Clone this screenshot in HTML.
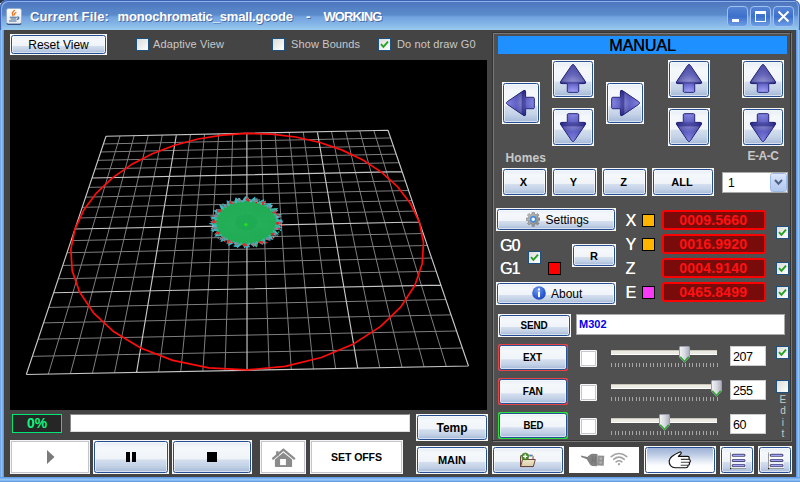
<!DOCTYPE html>
<html><head><meta charset="utf-8"><title>Current File: monochromatic_small.gcode - WORKING</title>
<style>
html,body{margin:0;padding:0}
body{width:800px;height:482px;overflow:hidden;position:relative;background:#222;font-family:"Liberation Sans",sans-serif;font-size:12px;color:#000}
.a{position:absolute;box-sizing:border-box}
#frame{left:0;top:0;width:800px;height:482px;border-radius:7px 7px 0 0;background:linear-gradient(90deg,#4a86de 0,#9ccaf5 1px,#8abef2 2px,#6aa2ea 3px,#5a96e6 4px,#5a96e6 796px,#6aa2ea 797px,#8abef2 798px,#9ccaf5 799px,#4a86de 800px)}
#fbot{left:0;top:477px;width:800px;height:5px;background:linear-gradient(#5a96e6 0,#6fa8ec 1px,#94c6f5 2.5px,#7db4f0 4px,#4a86de 5px)}
#title{left:0;top:0;width:800px;height:30px;background:linear-gradient(#3b5fae 0,#3b5fae 1px,#8fb5ea 1px,#8fb5ea 2px,#4f76bd 2px,#5582c6 9px,#5b8bcb 15px,#72a2de 17px,#84b5e6 24px,#9acbec 30px);border-radius:7px 7px 0 0;box-shadow:inset 1px 1px 0 #3d62b4,inset -1px 0 0 #3d62b4,inset 2px 2px 0 #8ab2ea,inset -2px 0 0 #8ab2ea}
#ttext{left:30px;top:9px;width:400px;height:16px;line-height:16px;color:#fff;font-weight:bold;font-size:13px;white-space:pre;text-shadow:1px 1px 0 rgba(30,50,110,.55)}
#content{left:4px;top:30px;width:792px;height:447px;background:#444}
.tb{top:6px;width:21px;height:21px;border:1px solid #9fc0f0;border-radius:4px;background:linear-gradient(#5584d4,#3e70cb 50%,#6c9de4)}
.btn{background:#f8f7f4}
.btn>.bi{position:absolute;left:1px;top:1px;right:1px;bottom:1px;box-sizing:border-box;border:1px solid #244f94;border-radius:2.5px;background:linear-gradient(#e7edf7 0,#f5f8fb 20%,#f0f4f9 56%,#d3deee 60%,#c4d2e7 80%,#a4b8d8 100%);box-shadow:inset 0 0 0 1px rgba(255,255,255,.55);display:flex;align-items:center;justify-content:center;font-weight:bold;font-size:11px;color:#000}
.t{display:inline-block;transform:scaleX(.9);letter-spacing:-.1px}
.btn.red{background:#e84444;border-radius:2px}
.btn.green{background:#2ee03e;border-radius:2px}
.btn.foc>.bi{background:linear-gradient(#9fb3d6 0,#b9c8e2 25%,#dfe6f2 50%,#fbfcfe 72%,#fff 100%);box-shadow:inset 1px 0 0 #fff,inset -1px 0 0 #fff}
.dis{background:#fff;border:1px solid #f4f4f4;box-shadow:inset 0 0 0 1px #c4c4cc}
.cb{width:13px;height:13px;border:1px solid #1c5180;background:linear-gradient(135deg,#dcdcd7,#fff)}
.cb svg{position:absolute;left:1px;top:1px}
.lbl{color:#c8c8c8;font-size:11px;white-space:pre;line-height:14px;letter-spacing:.12px}
.wl{color:#fff;font-size:16px;line-height:16px;white-space:pre;text-shadow:.3px 0 0 #fff}
.sw{width:13px;height:13px;border:1px solid #000}
.rf{width:104px;height:20px;border:2px solid #f00;border-radius:3px;background:#7a0b0b;color:#ff1212;text-indent:-1.5px;font-weight:bold;font-size:14px;line-height:16px;text-align:center;letter-spacing:.2px}
.bcb{width:17px;height:17px;background:#fff;border:1px solid #f8f8f8;box-shadow:inset 0 0 0 1px #c6c6ce;border-radius:1px}
.trk{height:5px;background:#ecebe3;border-top:1px solid #c8c6b8;border-bottom:1px solid #fff}
.tick{height:4px;background:repeating-linear-gradient(90deg,#a2a2a2 0,#a2a2a2 1.2px,transparent 1.2px,transparent 3.55px)}
.vf{width:36px;height:20px;background:#fff;border:1px solid #ccc;font-size:12.5px;line-height:21px;padding-left:2px;letter-spacing:-.5px}
</style></head><body>
<div class="a" style="left:0;top:0;width:7px;height:3px;background:#2c3440"></div><div class="a" style="left:0;top:3px;width:3px;height:4px;background:#f4f0e4"></div><div class="a" style="left:793px;top:0;width:7px;height:7px;background:#fff"></div>
<div id="frame" class="a"></div>
<div id="fbot" class="a"></div>
<div id="title" class="a"></div>
<div id="ttext" class="a"><span id="t1" class="a" style="left:0;letter-spacing:.13px">Current File:</span><span id="t2" class="a" style="left:87.5px;letter-spacing:-.18px">monochromatic_small.gcode</span><span id="t3" class="a" style="left:276px">-</span><span id="t4" class="a" style="left:293.5px;letter-spacing:-.9px">WORKING</span></div>
<div id="content" class="a"></div>

<!-- left toolbar -->
<div class="a btn" style="left:10px;top:34px;width:97px;height:21px"><div class="bi" style="font-weight:normal;font-size:12px">Reset View</div></div>
<div class="a cb" style="left:136px;top:38px"></div><div class="a lbl" style="left:153px;top:37px">Adaptive View</div>
<div class="a cb" style="left:272px;top:38px"></div><div class="a lbl" style="left:291px;top:37px">Show Bounds</div>
<div class="a cb" style="left:378px;top:38px"><svg width="9" height="9" viewBox="0 0 9 9"><path d="M1 4.2L3.4 6.8L8 1.6" stroke="#21a121" stroke-width="1.8" fill="none"/></svg></div><div class="a lbl" style="left:397px;top:37px">Do not draw G0</div>

<!-- canvas -->
<div class="a" style="left:10px;top:60px;width:477px;height:350px;background:#000;overflow:hidden">
<svg width="478" height="350" viewBox="0 0 478 350" style="position:absolute;left:0;top:0">
<path d="M110.07 75.91L38.34 314.08M93.41 83.94L380.61 77.95M124.15 75.61L60.39 313.65M90.72 91.98L383.32 85.89M138.23 75.32L82.45 313.23M87.93 100.32L386.14 94.13M152.31 75.02L104.52 312.80M85.04 108.98L389.06 102.69M180.48 74.43L148.67 311.96M78.89 127.37L395.27 120.87M194.57 74.14L170.75 311.53M75.62 137.14L398.57 130.52M208.66 73.84L192.84 311.11M72.21 147.32L402.00 140.59M222.76 73.55L214.94 310.68M68.66 157.94L405.59 151.08M250.96 72.96L259.16 309.83M61.08 180.62L413.25 173.51M265.06 72.66L281.28 309.41M57.02 192.74L417.35 185.50M279.17 72.37L303.41 308.98M52.78 205.44L421.64 198.06M293.28 72.07L325.55 308.56M48.32 218.75L426.13 211.23M321.51 71.48L369.84 307.70M38.74 247.42L435.82 239.59M335.63 71.19L391.99 307.28M33.57 262.87L441.04 254.89M349.75 70.89L414.15 306.85M28.12 279.16L446.55 271.01M363.87 70.60L436.32 306.43M22.37 296.34L452.36 288.02" stroke="#7e7e7e" stroke-width="1" fill="none"/>
<path d="M96.00 76.20L16.30 314.50M96.00 76.20L378.00 70.30M166.39 74.73L126.59 312.38M82.02 118.00L392.11 111.60M236.86 73.25L237.05 310.26M64.95 169.03L409.34 162.05M307.39 71.78L347.69 308.13M43.65 232.73L430.86 225.06M378.00 70.30L458.50 306.00M16.30 314.50L458.50 306.00" stroke="#c6c6c6" stroke-width="1.15" fill="none"/>
<polygon points="409.34,162.05 413.51,182.30 412.21,203.65 404.81,225.43 390.89,246.77 370.35,266.64 343.56,283.91 311.39,297.47 275.26,306.35 237.05,309.89 198.85,307.82 162.77,300.34 130.66,288.04 103.93,271.84 83.45,252.82 69.56,232.07 62.16,210.64 60.84,189.39 64.95,169.03 73.79,150.06 86.62,132.86 102.72,117.66 121.46,104.62 142.27,93.81 164.63,85.27 188.10,79.02 212.30,75.07 236.86,73.40 261.42,74.04 285.65,76.99 309.18,82.26 331.61,89.87 352.49,99.83 371.32,112.12 387.51,126.68 400.42,143.40" stroke="#ff0c0c" stroke-width="1.7" fill="none" stroke-linejoin="round"/><polygon points="273.8,161.1 266.1,164.1 272.7,168.0 264.3,169.5 269.2,174.5 260.5,174.4 263.4,180.1 255.1,178.5 255.8,184.6 248.4,181.5 246.8,187.5 240.9,183.2 237.1,188.8 233.0,183.5 227.4,188.2 225.4,182.3 218.2,185.9 218.5,179.8 210.3,182.0 212.8,176.1 204.1,176.7 208.7,171.4 200.1,170.5 206.5,166.2 198.6,163.7 206.3,160.7 199.7,156.8 208.1,155.3 203.2,150.3 211.9,150.4 209.0,144.7 217.3,146.3 216.6,140.2 224.0,143.3 225.6,137.3 231.5,141.6 235.3,136.0 239.4,141.3 245.0,136.6 247.0,142.5 254.2,138.9 253.9,145.0 262.1,142.8 259.6,148.7 268.3,148.1 263.7,153.4 272.3,154.3 265.9,158.6" fill="#3bb9c9"/><polygon points="272.6,163.0 265.1,165.5 270.9,169.6 262.7,170.7 266.9,175.7 258.6,175.3 260.7,180.9 252.9,179.0 252.9,184.9 246.1,181.6 244.0,187.3 238.6,182.9 234.5,188.0 231.0,182.8 225.1,187.0 223.7,181.3 216.5,184.3 217.3,178.5 209.2,180.1 212.1,174.6 203.8,174.7 208.6,169.9 200.6,168.5 207.0,164.6 199.8,161.8 207.3,159.3 201.5,155.2 209.7,154.1 205.5,149.1 213.8,149.5 211.7,143.9 219.5,145.8 219.5,139.9 226.3,143.2 228.4,137.5 233.8,141.9 237.9,136.8 241.4,142.0 247.3,137.8 248.7,143.5 255.9,140.5 255.1,146.3 263.2,144.7 260.3,150.2 268.6,150.1 263.8,154.9 271.8,156.3 265.4,160.2" fill="#7d8896"/><polygon points="271.1,162.5 263.6,167.6 266.0,174.7 255.8,176.6 252.8,183.7 242.8,181.8 235.2,187.0 228.0,181.8 217.9,183.6 215.4,176.6 205.5,174.6 208.4,167.5 201.3,162.3 208.8,157.2 206.4,150.1 216.6,148.2 219.6,141.1 229.6,143.0 237.2,137.8 244.4,143.0 254.5,141.2 257.0,148.2 266.9,150.2 264.0,157.3" fill="#cf3030"/><polygon points="270.0,160.3 264.7,163.2 269.4,166.5 263.2,168.4 266.5,172.4 259.9,173.2 261.6,177.7 255.0,177.2 254.9,181.9 248.8,180.2 247.0,184.7 241.7,182.0 238.4,186.1 234.3,182.5 229.5,185.8 227.0,181.6 221.2,184.0 220.3,179.4 213.9,180.6 214.7,176.0 208.0,176.1 210.6,171.7 204.1,170.6 208.2,166.8 202.4,164.5 207.7,161.6 203.0,158.3 209.2,156.4 205.9,152.4 212.5,151.6 210.8,147.1 217.4,147.6 217.5,142.9 223.6,144.6 225.4,140.1 230.7,142.8 234.0,138.7 238.1,142.3 242.9,139.0 245.4,143.2 251.2,140.8 252.1,145.4 258.5,144.2 257.7,148.8 264.4,148.7 261.8,153.1 268.3,154.2 264.2,158.0" fill="#36b7a6"/><polygon points="267.4,161.3 264.7,162.7 267.2,164.2 264.3,165.3 266.5,167.0 263.5,167.9 265.3,169.8 262.1,170.4 263.6,172.4 260.3,172.7 261.4,174.9 258.1,174.9 258.8,177.1 255.6,176.8 255.8,179.1 252.6,178.5 252.5,180.8 249.5,179.9 248.8,182.2 246.0,181.1 245.0,183.3 242.5,181.9 241.0,184.0 238.8,182.3 237.0,184.3 235.0,182.5 232.9,184.3 231.3,182.3 228.9,183.8 227.7,181.7 225.0,183.0 224.2,180.8 221.3,181.9 220.9,179.6 217.8,180.4 217.9,178.1 214.7,178.7 215.2,176.4 211.9,176.6 212.8,174.4 209.6,174.3 210.9,172.2 207.7,171.8 209.4,169.8 206.3,169.1 208.3,167.3 205.4,166.3 207.7,164.7 205.0,163.5 207.7,162.1 205.2,160.6 208.1,159.5 205.9,157.8 208.9,156.9 207.1,155.0 210.3,154.4 208.8,152.4 212.1,152.1 211.0,149.9 214.3,149.9 213.6,147.7 216.8,148.0 216.6,145.7 219.8,146.3 219.9,144.0 222.9,144.9 223.6,142.6 226.4,143.7 227.4,141.5 229.9,142.9 231.4,140.8 233.6,142.5 235.4,140.5 237.4,142.3 239.5,140.5 241.1,142.5 243.5,141.0 244.7,143.1 247.4,141.8 248.2,144.0 251.1,142.9 251.5,145.2 254.6,144.4 254.5,146.7 257.7,146.1 257.2,148.4 260.5,148.2 259.6,150.4 262.8,150.5 261.5,152.6 264.7,153.0 263.0,155.0 266.1,155.7 264.1,157.5 267.0,158.5 264.7,160.1" fill="#1fab53"/><path d="M247.5 162.4L264.8 162.4M247.4 163.1L264.7 164.1M247.3 163.8L264.3 165.9M247.1 164.4L263.8 167.6M246.8 165.1L263.1 169.3M246.4 165.7L262.1 170.9M246.0 166.4L260.9 172.4M245.4 166.9L259.6 173.9M244.8 167.5L258.1 175.3M244.2 168.0L256.4 176.6M243.5 168.5L254.6 177.8M242.7 168.9L252.6 178.8M241.8 169.3L250.5 179.8M241.0 169.6L248.3 180.6M240.1 169.8L246.0 181.3M239.1 170.1L243.6 181.8M238.2 170.2L241.2 182.2M237.2 170.3L238.7 182.4M236.2 170.3L236.2 182.5M235.2 170.3L233.7 182.4M234.2 170.2L231.2 182.2M233.3 170.1L228.8 181.8M232.3 169.8L226.4 181.3M231.4 169.6L224.1 180.6M230.6 169.3L221.9 179.8M229.7 168.9L219.8 178.8M228.9 168.5L217.8 177.8M228.2 168.0L216.0 176.6M227.6 167.5L214.3 175.3M227.0 166.9L212.8 173.9M226.4 166.4L211.5 172.4M226.0 165.7L210.3 170.9M225.6 165.1L209.3 169.3M225.3 164.4L208.6 167.6M225.1 163.8L208.1 165.9M225.0 163.1L207.7 164.1M224.9 162.4L207.6 162.4M225.0 161.7L207.7 160.7M225.1 161.0L208.1 158.9M225.3 160.4L208.6 157.2M225.6 159.7L209.3 155.5M226.0 159.1L210.3 153.9M226.4 158.4L211.5 152.4M227.0 157.9L212.8 150.9M227.6 157.3L214.3 149.5M228.2 156.8L216.0 148.2M228.9 156.3L217.8 147.0M229.7 155.9L219.8 146.0M230.6 155.5L221.9 145.0M231.4 155.2L224.1 144.2M232.3 155.0L226.4 143.5M233.3 154.7L228.8 143.0M234.2 154.6L231.2 142.6M235.2 154.5L233.7 142.4M236.2 154.5L236.2 142.3M237.2 154.5L238.7 142.4M238.2 154.6L241.2 142.6M239.1 154.7L243.6 143.0M240.1 155.0L246.0 143.5M241.0 155.2L248.3 144.2M241.8 155.5L250.5 145.0M242.7 155.9L252.6 146.0M243.5 156.3L254.6 147.0M244.2 156.8L256.4 148.2M244.8 157.3L258.1 149.5M245.4 157.9L259.6 150.9M246.0 158.4L260.9 152.4M246.4 159.1L262.1 153.9M246.8 159.7L263.1 155.5M247.1 160.4L263.8 157.2M247.3 161.0L264.3 158.9M247.4 161.7L264.7 160.7" stroke="#38bc6c" stroke-width=".6" stroke-opacity=".4" fill="none"/><rect x="222.3" y="181.9" width="1.4" height="1.4" fill="#e02020"/><rect x="266.1" y="172.7" width="1.4" height="1.4" fill="#40c8d8"/><rect x="205.3" y="150.0" width="1.4" height="1.4" fill="#40c8d8"/><rect x="268.0" y="167.8" width="1.4" height="1.4" fill="#e02020"/><rect x="238.2" y="185.8" width="1.4" height="1.4" fill="#e02020"/><rect x="250.5" y="143.2" width="1.4" height="1.4" fill="#40c8d8"/><rect x="213.3" y="145.1" width="1.4" height="1.4" fill="#e02020"/><rect x="207.5" y="151.8" width="1.4" height="1.4" fill="#40c8d8"/><rect x="269.9" y="169.5" width="1.4" height="1.4" fill="#40c8d8"/><rect x="207.1" y="173.8" width="1.4" height="1.4" fill="#2fb86a"/><rect x="223.6" y="185.3" width="1.4" height="1.4" fill="#40c8d8"/><rect x="262.9" y="176.6" width="1.4" height="1.4" fill="#40c8d8"/><rect x="213.0" y="179.2" width="1.4" height="1.4" fill="#e02020"/><rect x="205.1" y="153.1" width="1.4" height="1.4" fill="#8a8a98"/><rect x="222.4" y="141.6" width="1.4" height="1.4" fill="#40c8d8"/><rect x="201.4" y="167.8" width="1.4" height="1.4" fill="#40c8d8"/><rect x="225.5" y="185.7" width="1.4" height="1.4" fill="#40c8d8"/><rect x="264.0" y="173.4" width="1.4" height="1.4" fill="#8a8a98"/><rect x="260.6" y="145.3" width="1.4" height="1.4" fill="#40c8d8"/><rect x="212.6" y="148.8" width="1.4" height="1.4" fill="#2fb86a"/><rect x="206.0" y="174.4" width="1.4" height="1.4" fill="#40c8d8"/><rect x="266.0" y="153.1" width="1.4" height="1.4" fill="#e02020"/><rect x="239.3" y="139.0" width="1.4" height="1.4" fill="#40c8d8"/><rect x="218.9" y="181.5" width="1.4" height="1.4" fill="#8a8a98"/><rect x="207.4" y="151.3" width="1.4" height="1.4" fill="#e02020"/><rect x="267.2" y="154.5" width="1.4" height="1.4" fill="#e02020"/><rect x="268.0" y="171.4" width="1.4" height="1.4" fill="#2fb86a"/><rect x="271.2" y="161.3" width="1.4" height="1.4" fill="#40c8d8"/><rect x="228.8" y="138.1" width="1.4" height="1.4" fill="#40c8d8"/><rect x="268.7" y="165.7" width="1.4" height="1.4" fill="#40c8d8"/><rect x="210.9" y="147.5" width="1.4" height="1.4" fill="#40c8d8"/><rect x="239.7" y="140.9" width="1.4" height="1.4" fill="#40c8d8"/><rect x="207.7" y="177.4" width="1.4" height="1.4" fill="#8a8a98"/><rect x="264.9" y="173.6" width="1.4" height="1.4" fill="#2fb86a"/><rect x="230.8" y="183.8" width="1.4" height="1.4" fill="#8a8a98"/><rect x="257.0" y="145.6" width="1.4" height="1.4" fill="#8a8a98"/><rect x="270.3" y="160.4" width="1.4" height="1.4" fill="#8a8a98"/><rect x="266.1" y="156.7" width="1.4" height="1.4" fill="#40c8d8"/><rect x="256.0" y="181.9" width="1.4" height="1.4" fill="#e02020"/><rect x="202.7" y="164.6" width="1.4" height="1.4" fill="#40c8d8"/><rect x="230.0" y="183.7" width="1.4" height="1.4" fill="#2fb86a"/><rect x="213.4" y="179.6" width="1.4" height="1.4" fill="#40c8d8"/><rect x="224.1" y="140.7" width="1.4" height="1.4" fill="#2fb86a"/><rect x="216.8" y="142.4" width="1.4" height="1.4" fill="#8a8a98"/><rect x="264.3" y="148.0" width="1.4" height="1.4" fill="#2fb86a"/><rect x="210.9" y="176.7" width="1.4" height="1.4" fill="#e02020"/><rect x="203.9" y="165.0" width="1.4" height="1.4" fill="#40c8d8"/><rect x="264.8" y="171.4" width="1.4" height="1.4" fill="#40c8d8"/><rect x="262.2" y="177.5" width="1.4" height="1.4" fill="#e02020"/><rect x="267.2" y="162.4" width="1.4" height="1.4" fill="#e02020"/><rect x="268.2" y="154.9" width="1.4" height="1.4" fill="#e02020"/><rect x="260.0" y="145.6" width="1.4" height="1.4" fill="#40c8d8"/><rect x="212.4" y="143.6" width="1.4" height="1.4" fill="#2fb86a"/><rect x="215.9" y="178.7" width="1.4" height="1.4" fill="#8a8a98"/><rect x="269.1" y="161.4" width="1.4" height="1.4" fill="#8a8a98"/><rect x="224.5" y="182.5" width="1.4" height="1.4" fill="#40c8d8"/><rect x="234.2" y="139.3" width="1.4" height="1.4" fill="#40c8d8"/><rect x="205.1" y="160.1" width="1.4" height="1.4" fill="#2fb86a"/><rect x="214.1" y="180.7" width="1.4" height="1.4" fill="#e02020"/><rect x="237.8" y="140.1" width="1.4" height="1.4" fill="#e02020"/><rect x="225.7" y="141.4" width="1.4" height="1.4" fill="#40c8d8"/><rect x="263.2" y="150.1" width="1.4" height="1.4" fill="#40c8d8"/><rect x="202.2" y="157.4" width="1.4" height="1.4" fill="#40c8d8"/><rect x="214.1" y="144.5" width="1.4" height="1.4" fill="#40c8d8"/><rect x="248.3" y="139.3" width="1.4" height="1.4" fill="#40c8d8"/><rect x="246.4" y="184.5" width="1.4" height="1.4" fill="#e02020"/><rect x="271.0" y="160.8" width="1.4" height="1.4" fill="#8a8a98"/><rect x="234.2" y="186.4" width="1.4" height="1.4" fill="#40c8d8"/><rect x="202.4" y="170.6" width="1.4" height="1.4" fill="#40c8d8"/><rect x="267.2" y="156.1" width="1.4" height="1.4" fill="#40c8d8"/><rect x="262.6" y="176.2" width="1.4" height="1.4" fill="#40c8d8"/><rect x="245.8" y="185.2" width="1.4" height="1.4" fill="#2fb86a"/><rect x="253.9" y="142.9" width="1.4" height="1.4" fill="#40c8d8"/><rect x="245.6" y="142.0" width="1.4" height="1.4" fill="#e02020"/><rect x="265.5" y="149.3" width="1.4" height="1.4" fill="#40c8d8"/><rect x="205.3" y="165.4" width="1.4" height="1.4" fill="#40c8d8"/><rect x="266.8" y="175.4" width="1.4" height="1.4" fill="#8a8a98"/><rect x="202.6" y="168.0" width="1.4" height="1.4" fill="#e02020"/><rect x="231.3" y="140.8" width="1.4" height="1.4" fill="#40c8d8"/><rect x="269.3" y="166.5" width="1.4" height="1.4" fill="#8a8a98"/><rect x="247.0" y="142.0" width="1.4" height="1.4" fill="#2fb86a"/><rect x="270.0" y="159.5" width="1.4" height="1.4" fill="#40c8d8"/><rect x="254.8" y="181.9" width="1.4" height="1.4" fill="#e02020"/><rect x="272.0" y="164.7" width="1.4" height="1.4" fill="#e02020"/><rect x="201.0" y="158.2" width="1.4" height="1.4" fill="#8a8a98"/><rect x="267.3" y="160.5" width="1.4" height="1.4" fill="#40c8d8"/><rect x="267.1" y="166.3" width="1.4" height="1.4" fill="#2fb86a"/><rect x="238.2" y="186.0" width="1.4" height="1.4" fill="#40c8d8"/><rect x="202.5" y="155.6" width="1.4" height="1.4" fill="#e02020"/><rect x="263.4" y="150.3" width="1.4" height="1.4" fill="#8a8a98"/><circle cx="235.9" cy="164.6" r="1.7" fill="#22e022"/>
</svg></div>

<!-- progress -->
<div class="a" style="left:12px;top:414px;width:50px;height:19px;background:#262626;border:1px solid #00e676;color:#0cf57c;font-weight:bold;font-size:14px;line-height:16px;text-align:center">0%</div>
<div class="a" style="left:70px;top:414px;width:340px;height:18px;background:#fff;border:1px solid #8a8a8a;border-right-color:#ddd;border-bottom-color:#ddd"></div>

<!-- bottom-left buttons -->
<div class="a dis" style="left:10px;top:440px;width:80px;height:34px"><svg class="a" style="left:35px;top:9px" width="10" height="14" viewBox="0 0 10 14"><path d="M1 0L8.5 7L1 14Z" fill="#7a7a7a"/></svg></div>
<div class="a btn" style="left:93px;top:440px;width:76px;height:34px"><div class="bi"><svg width="11" height="10" viewBox="0 0 11 10"><rect x="0" y="0" width="4" height="10" fill="#000"/><rect x="6" y="0" width="4" height="10" fill="#000"/></svg></div></div>
<div class="a btn" style="left:172px;top:440px;width:80px;height:34px"><div class="bi"><svg width="10" height="10" viewBox="0 0 10 10"><rect width="10" height="10" fill="#000"/></svg></div></div>
<div class="a dis" style="left:260px;top:440px;width:46px;height:34px"><svg class="a" style="left:9px;top:6px" width="27" height="21" viewBox="0 0 27 21"><path d="M3 11.6L13.4 2.7L24.2 11.6" fill="none" stroke="#8b8b8b" stroke-width="2.3" stroke-linecap="round" stroke-linejoin="miter"/><rect x="6.1" y="4.2" width="2.5" height="5" fill="#8b8b8b"/><path d="M4.9 12.6L13.4 5.4L22.1 12.6V19.2Q22.1 19.9 21.4 19.9H5.6Q4.9 19.9 4.9 19.2Z" fill="#8b8b8b"/><rect x="10.1" y="12" width="5.8" height="6.1" fill="#fff"/></svg></div>
<div class="a dis" style="left:310px;top:440px;width:93px;height:34px;font-weight:bold;font-size:11px;line-height:32px;text-align:center"><span class="t" style="transform:scaleX(.96)">SET OFFS</span></div>
<div class="a btn" style="left:416px;top:414px;width:72px;height:27px"><div class="bi" style="font-size:12px">Temp</div></div>
<div class="a btn" style="left:416px;top:446px;width:72px;height:28px"><div class="bi"><span class="t" style="transform:none;letter-spacing:0">MAIN</span></div></div>

<!-- right panel -->
<div class="a" style="left:493px;top:33px;width:299px;height:409px;border:1px solid #787878;background:#505050"></div>
<div class="a" style="left:492px;top:32px;width:299px;height:409px;border:1px solid #353535"></div>
<div class="a" style="left:498px;top:36px;width:289px;height:18px;background:#1e90ff;color:#000;font-size:16px;line-height:20px;text-align:center;text-shadow:.4px 0 0 #000">MANUAL</div>

<svg width="0" height="0" style="position:absolute"><defs>
<linearGradient id="ag" x1="0" y1="0" x2="0" y2="1"><stop offset="0" stop-color="#2c2c8c"/><stop offset=".35" stop-color="#5050a6"/><stop offset=".6" stop-color="#8484c2"/><stop offset=".66" stop-color="#25257e"/><stop offset=".72" stop-color="#5a5ac6"/><stop offset="1" stop-color="#a2a2fa"/></linearGradient>
<linearGradient id="ag2" x1="0" y1="0" x2="0" y2="1"><stop offset="0" stop-color="#7676d8"/><stop offset=".35" stop-color="#4e4eb8"/><stop offset=".52" stop-color="#6c6cb6"/><stop offset=".58" stop-color="#262680"/><stop offset=".68" stop-color="#363696"/><stop offset=".72" stop-color="#5454ba"/><stop offset="1" stop-color="#7c7cde"/></linearGradient>
<linearGradient id="agl" x1="0" y1="0" x2="1" y2="0"><stop offset="0" stop-color="#1c1c78" stop-opacity=".45"/><stop offset=".5" stop-color="#b0b0ff" stop-opacity=".22"/><stop offset="1" stop-color="#1c1c78" stop-opacity=".45"/></linearGradient>
</defs></svg><div class="a btn" style="left:502px;top:82px;width:38px;height:42px"><div class="bi"><svg width="36" height="40" viewBox="0 0 36 40" style="position:absolute;left:-1px;top:-1px"><g transform="translate(18 20) rotate(-90) translate(-13 -15.3)"><path d="M13 .8Q13.8 .8 14.4 1.7L25.4 17.9Q26.5 19.9 24.1 19.9H18.7V27.5Q18.7 28.6 17.5 28.6H8.5Q7.3 28.6 7.3 27.5V19.9H1.9Q-.5 19.9 .6 17.9L11.6 1.7Q12.2 .8 13 .8Z" fill="url(#ag2)" stroke="#18186c" stroke-width="1"/><path d="M13 .8Q13.8 .8 14.4 1.7L25.4 17.9Q26.5 19.9 24.1 19.9H18.7V27.5Q18.7 28.6 17.5 28.6H8.5Q7.3 28.6 7.3 27.5V19.9H1.9Q-.5 19.9 .6 17.9L11.6 1.7Q12.2 .8 13 .8Z" fill="url(#agl)"/></g></svg></div></div><div class="a btn" style="left:606px;top:82px;width:38px;height:42px"><div class="bi"><svg width="36" height="40" viewBox="0 0 36 40" style="position:absolute;left:-1px;top:-1px"><g transform="translate(18 20) rotate(90) translate(-13 -15.3)"><path d="M13 .8Q13.8 .8 14.4 1.7L25.4 17.9Q26.5 19.9 24.1 19.9H18.7V27.5Q18.7 28.6 17.5 28.6H8.5Q7.3 28.6 7.3 27.5V19.9H1.9Q-.5 19.9 .6 17.9L11.6 1.7Q12.2 .8 13 .8Z" fill="url(#ag2)" stroke="#18186c" stroke-width="1"/><path d="M13 .8Q13.8 .8 14.4 1.7L25.4 17.9Q26.5 19.9 24.1 19.9H18.7V27.5Q18.7 28.6 17.5 28.6H8.5Q7.3 28.6 7.3 27.5V19.9H1.9Q-.5 19.9 .6 17.9L11.6 1.7Q12.2 .8 13 .8Z" fill="url(#agl)"/></g></svg></div></div><div class="a btn" style="left:552px;top:60px;width:42px;height:38px"><div class="bi"><svg width="40" height="36" viewBox="0 0 40 36" style="position:absolute;left:-1px;top:-1px"><g transform="translate(20 18) rotate(0) translate(-13 -15.3)"><path d="M13 .8Q13.8 .8 14.4 1.7L25.4 17.9Q26.5 19.9 24.1 19.9H18.7V27.5Q18.7 28.6 17.5 28.6H8.5Q7.3 28.6 7.3 27.5V19.9H1.9Q-.5 19.9 .6 17.9L11.6 1.7Q12.2 .8 13 .8Z" fill="url(#ag)" stroke="#18186c" stroke-width="1"/><path d="M13 .8Q13.8 .8 14.4 1.7L25.4 17.9Q26.5 19.9 24.1 19.9H18.7V27.5Q18.7 28.6 17.5 28.6H8.5Q7.3 28.6 7.3 27.5V19.9H1.9Q-.5 19.9 .6 17.9L11.6 1.7Q12.2 .8 13 .8Z" fill="url(#agl)"/></g></svg></div></div><div class="a btn" style="left:552px;top:108px;width:42px;height:38px"><div class="bi"><svg width="40" height="36" viewBox="0 0 40 36" style="position:absolute;left:-1px;top:-1px"><g transform="translate(20 18) rotate(180) translate(-13 -15.3)"><path d="M13 .8Q13.8 .8 14.4 1.7L25.4 17.9Q26.5 19.9 24.1 19.9H18.7V27.5Q18.7 28.6 17.5 28.6H8.5Q7.3 28.6 7.3 27.5V19.9H1.9Q-.5 19.9 .6 17.9L11.6 1.7Q12.2 .8 13 .8Z" fill="url(#ag2)" stroke="#18186c" stroke-width="1"/><path d="M13 .8Q13.8 .8 14.4 1.7L25.4 17.9Q26.5 19.9 24.1 19.9H18.7V27.5Q18.7 28.6 17.5 28.6H8.5Q7.3 28.6 7.3 27.5V19.9H1.9Q-.5 19.9 .6 17.9L11.6 1.7Q12.2 .8 13 .8Z" fill="url(#agl)"/></g></svg></div></div><div class="a btn" style="left:668px;top:60px;width:42px;height:38px"><div class="bi"><svg width="40" height="36" viewBox="0 0 40 36" style="position:absolute;left:-1px;top:-1px"><g transform="translate(20 18) rotate(0) translate(-13 -15.3)"><path d="M13 .8Q13.8 .8 14.4 1.7L25.4 17.9Q26.5 19.9 24.1 19.9H18.7V27.5Q18.7 28.6 17.5 28.6H8.5Q7.3 28.6 7.3 27.5V19.9H1.9Q-.5 19.9 .6 17.9L11.6 1.7Q12.2 .8 13 .8Z" fill="url(#ag)" stroke="#18186c" stroke-width="1"/><path d="M13 .8Q13.8 .8 14.4 1.7L25.4 17.9Q26.5 19.9 24.1 19.9H18.7V27.5Q18.7 28.6 17.5 28.6H8.5Q7.3 28.6 7.3 27.5V19.9H1.9Q-.5 19.9 .6 17.9L11.6 1.7Q12.2 .8 13 .8Z" fill="url(#agl)"/></g></svg></div></div><div class="a btn" style="left:668px;top:108px;width:42px;height:38px"><div class="bi"><svg width="40" height="36" viewBox="0 0 40 36" style="position:absolute;left:-1px;top:-1px"><g transform="translate(20 18) rotate(180) translate(-13 -15.3)"><path d="M13 .8Q13.8 .8 14.4 1.7L25.4 17.9Q26.5 19.9 24.1 19.9H18.7V27.5Q18.7 28.6 17.5 28.6H8.5Q7.3 28.6 7.3 27.5V19.9H1.9Q-.5 19.9 .6 17.9L11.6 1.7Q12.2 .8 13 .8Z" fill="url(#ag2)" stroke="#18186c" stroke-width="1"/><path d="M13 .8Q13.8 .8 14.4 1.7L25.4 17.9Q26.5 19.9 24.1 19.9H18.7V27.5Q18.7 28.6 17.5 28.6H8.5Q7.3 28.6 7.3 27.5V19.9H1.9Q-.5 19.9 .6 17.9L11.6 1.7Q12.2 .8 13 .8Z" fill="url(#agl)"/></g></svg></div></div><div class="a btn" style="left:742px;top:60px;width:42px;height:38px"><div class="bi"><svg width="40" height="36" viewBox="0 0 40 36" style="position:absolute;left:-1px;top:-1px"><g transform="translate(20 18) rotate(0) translate(-13 -15.3)"><path d="M13 .8Q13.8 .8 14.4 1.7L25.4 17.9Q26.5 19.9 24.1 19.9H18.7V27.5Q18.7 28.6 17.5 28.6H8.5Q7.3 28.6 7.3 27.5V19.9H1.9Q-.5 19.9 .6 17.9L11.6 1.7Q12.2 .8 13 .8Z" fill="url(#ag)" stroke="#18186c" stroke-width="1"/><path d="M13 .8Q13.8 .8 14.4 1.7L25.4 17.9Q26.5 19.9 24.1 19.9H18.7V27.5Q18.7 28.6 17.5 28.6H8.5Q7.3 28.6 7.3 27.5V19.9H1.9Q-.5 19.9 .6 17.9L11.6 1.7Q12.2 .8 13 .8Z" fill="url(#agl)"/></g></svg></div></div><div class="a btn" style="left:742px;top:108px;width:42px;height:38px"><div class="bi"><svg width="40" height="36" viewBox="0 0 40 36" style="position:absolute;left:-1px;top:-1px"><g transform="translate(20 18) rotate(180) translate(-13 -15.3)"><path d="M13 .8Q13.8 .8 14.4 1.7L25.4 17.9Q26.5 19.9 24.1 19.9H18.7V27.5Q18.7 28.6 17.5 28.6H8.5Q7.3 28.6 7.3 27.5V19.9H1.9Q-.5 19.9 .6 17.9L11.6 1.7Q12.2 .8 13 .8Z" fill="url(#ag2)" stroke="#18186c" stroke-width="1"/><path d="M13 .8Q13.8 .8 14.4 1.7L25.4 17.9Q26.5 19.9 24.1 19.9H18.7V27.5Q18.7 28.6 17.5 28.6H8.5Q7.3 28.6 7.3 27.5V19.9H1.9Q-.5 19.9 .6 17.9L11.6 1.7Q12.2 .8 13 .8Z" fill="url(#agl)"/></g></svg></div></div>

<div class="a lbl" style="left:505.5px;top:151px;font-weight:bold;font-size:12px">Homes</div>
<div class="a lbl" style="left:747.5px;top:149px;font-weight:bold;font-size:12px;letter-spacing:-.45px">E-A-C</div>
<div class="a btn" style="left:502px;top:168px;width:45px;height:28px"><div class="bi" style="padding-right:2px"><span class="t" style="transform:none;letter-spacing:0">X</span></div></div>
<div class="a btn" style="left:552px;top:168px;width:45px;height:28px"><div class="bi" style="padding-right:2px"><span class="t" style="transform:none;letter-spacing:0">Y</span></div></div>
<div class="a btn" style="left:602px;top:168px;width:45px;height:28px"><div class="bi" style="padding-right:2px"><span class="t" style="transform:none;letter-spacing:0">Z</span></div></div>
<div class="a btn" style="left:652px;top:168px;width:62px;height:28px"><div class="bi" style="padding-right:2px"><span class="t" style="transform:none;letter-spacing:0">ALL</span></div></div>
<div class="a" style="left:722px;top:172px;width:66px;height:21px;background:#fff;border:1px solid #a9a9a9;font-size:12px;line-height:21px;padding-left:5px">1</div>
<div class="a" style="left:770px;top:173px;width:16.5px;height:19px;border:1px solid #9fb9e6;border-radius:2.5px;background:linear-gradient(#dde7fa,#c3d4f4 50%,#b2c8ee)"><svg class="a" style="left:3px;top:5px" width="9" height="7" viewBox="0 0 9 7"><path d="M1 1L4.5 4.8L8 1" stroke="#4d6185" stroke-width="2" fill="none"/></svg></div>

<div class="a btn" style="left:496px;top:208px;width:120px;height:23px"><div class="bi" style="font-weight:normal;font-size:12px;display:block"><svg class="a" style="left:27.5px;top:2px" width="14.5" height="14.5" viewBox="0 0 14.5 14.5"><defs><linearGradient id="gg" x1="0" y1="0" x2="1" y2="1"><stop offset="0" stop-color="#c9c9c9"/><stop offset="1" stop-color="#7d7d7d"/></linearGradient></defs><path d="M12.40 6.01L14.36 6.12L14.36 8.38L12.40 8.49L11.77 10.02L13.07 11.48L11.48 13.07L10.02 11.77L8.49 12.40L8.38 14.36L6.12 14.36L6.01 12.40L4.48 11.77L3.02 13.07L1.43 11.48L2.73 10.02L2.10 8.49L0.14 8.38L0.14 6.12L2.10 6.01L2.73 4.48L1.43 3.02L3.02 1.43L4.48 2.73L6.01 2.10L6.12 0.14L8.38 0.14L8.49 2.10L10.02 2.73L11.48 1.43L13.07 3.02L11.77 4.48Z" fill="url(#gg)" stroke="#7a7a7a" stroke-width=".6"/><circle cx="7.25" cy="7.25" r="2.5" fill="#f4f8fd" stroke="#3a8be4" stroke-width="1.4"/></svg><span id="tset" class="a" style="left:47.5px;top:3px;line-height:14px">Settings</span></div></div>
<div class="a btn" style="left:496px;top:282px;width:120px;height:23px"><div class="bi" style="font-weight:normal;font-size:12px;display:block"><svg class="a" style="left:34px;top:2px" width="14" height="14" viewBox="0 0 14 14"><defs><radialGradient id="ig" cx=".4" cy=".3" r=".8"><stop offset="0" stop-color="#6f9af2"/><stop offset=".6" stop-color="#2f5fd6"/><stop offset="1" stop-color="#1d3fae"/></radialGradient></defs><circle cx="7" cy="7" r="6.8" fill="url(#ig)"/><rect x="6" y="5.6" width="2" height="5.6" rx=".4" fill="#fff"/><circle cx="7" cy="3.5" r="1.15" fill="#fff"/></svg><span id="tabo" class="a" style="left:53px;top:3px;line-height:14px">About</span></div></div>
<div class="a wl" style="left:500px;top:237.6px;letter-spacing:-.9px">G0</div>
<div class="a wl" style="left:500px;top:261.4px;letter-spacing:-.9px">G1</div>
<div class="a cb" style="left:528px;top:251px"><svg width="9" height="9" viewBox="0 0 9 9"><path d="M1 4.2L3.4 6.8L8 1.6" stroke="#21a121" stroke-width="1.8" fill="none"/></svg></div>
<div class="a sw" style="left:548px;top:262px;background:#f00"></div>
<div class="a btn" style="left:572px;top:244px;width:44px;height:23px"><div class="bi"><span class="t" style="transform:none;letter-spacing:0">R</span></div></div>

<div class="a wl" style="left:625.5px;top:213.2px">X</div>
<div class="a wl" style="left:625.5px;top:237.2px">Y</div>
<div class="a wl" style="left:625.5px;top:261.2px">Z</div>
<div class="a wl" style="left:625.5px;top:285.2px">E</div>
<div class="a sw" style="left:642px;top:214px;background:#ffb400"></div>
<div class="a sw" style="left:642px;top:238px;background:#ffb400"></div>
<div class="a sw" style="left:642px;top:286px;background:#f83af8"></div>
<div class="a rf" style="left:662px;top:210px">0009.5660</div>
<div class="a rf" style="left:662px;top:234px">0016.9920</div>
<div class="a rf" style="left:662px;top:258px">0004.9140</div>
<div class="a rf" style="left:662px;top:282px">0465.8499</div>
<div class="a cb" style="left:776px;top:226px"><svg width="9" height="9" viewBox="0 0 9 9"><path d="M1 4.2L3.4 6.8L8 1.6" stroke="#21a121" stroke-width="1.8" fill="none"/></svg></div>
<div class="a cb" style="left:776px;top:262px"><svg width="9" height="9" viewBox="0 0 9 9"><path d="M1 4.2L3.4 6.8L8 1.6" stroke="#21a121" stroke-width="1.8" fill="none"/></svg></div>
<div class="a cb" style="left:776px;top:286px"><svg width="9" height="9" viewBox="0 0 9 9"><path d="M1 4.2L3.4 6.8L8 1.6" stroke="#21a121" stroke-width="1.8" fill="none"/></svg></div>

<div class="a btn" style="left:498px;top:314px;width:73px;height:23px"><div class="bi" style="padding-bottom:2px"><span class="t">SEND</span></div></div>
<div class="a" style="left:576px;top:314px;width:209px;height:21px;background:#fff;border:1px solid #aaa;color:#0000f0;font-weight:bold;font-size:11px;line-height:18px;padding-left:2px">M302</div>

<div class="a btn red" style="left:498px;top:344px;width:70px;height:27px"><div class="bi" style="padding-bottom:2px"><span class="t" style="transform:scaleX(0.9)">EXT</span></div></div><div class="a bcb" style="left:580px;top:350px"></div><div class="a trk" style="left:611px;top:350px;width:106px"></div><svg class="a" style="left:611px;top:363px" width="108" height="4" viewBox="0 0 108 4"><path d="M0.5 0V4M4.5 0V4M7.5 0V4M11.5 0V4M14.5 0V4M18.5 0V4M21.5 0V4M25.5 0V4M28.5 0V4M32.5 0V4M35.5 0V4M39.5 0V4M42.5 0V4M46.5 0V4M49.5 0V4M53.5 0V4M57.5 0V4M60.5 0V4M64.5 0V4M67.5 0V4M71.5 0V4M74.5 0V4M78.5 0V4M81.5 0V4M85.5 0V4M88.5 0V4M92.5 0V4M95.5 0V4M99.5 0V4M102.5 0V4M106.5 0V4" stroke="#a6a6a6" stroke-width="1" fill="none"/></svg><svg class="a" style="left:679px;top:346px" width="11" height="17" viewBox="0 0 11 17"><defs><linearGradient id="tg" x1="0" y1="0" x2="1" y2="0"><stop offset="0" stop-color="#f4f4f6"/><stop offset=".5" stop-color="#d8dae2"/><stop offset="1" stop-color="#a9adbd"/></linearGradient></defs><path d="M1.5 .5H9.5Q10.5 .5 10.5 1.5V11L5.5 16.3L.5 11V1.5Q.5 .5 1.5 .5Z" fill="url(#tg)" stroke="#9a9eb0" stroke-width="1"/><path d="M1.3 10.8L5.5 15.4L9.7 10.8" fill="none" stroke="#23a723" stroke-width="1.3"/></svg><div class="a vf" style="left:730px;top:346px">207</div><div class="a btn red" style="left:498px;top:378px;width:70px;height:27px"><div class="bi" style="padding-bottom:2px"><span class="t" style="transform:scaleX(0.92)">FAN</span></div></div><div class="a bcb" style="left:580px;top:384px"></div><div class="a trk" style="left:611px;top:384px;width:106px"></div><svg class="a" style="left:611px;top:397px" width="108" height="4" viewBox="0 0 108 4"><path d="M0.5 0V4M4.5 0V4M7.5 0V4M11.5 0V4M14.5 0V4M18.5 0V4M21.5 0V4M25.5 0V4M28.5 0V4M32.5 0V4M35.5 0V4M39.5 0V4M42.5 0V4M46.5 0V4M49.5 0V4M53.5 0V4M57.5 0V4M60.5 0V4M64.5 0V4M67.5 0V4M71.5 0V4M74.5 0V4M78.5 0V4M81.5 0V4M85.5 0V4M88.5 0V4M92.5 0V4M95.5 0V4M99.5 0V4M102.5 0V4M106.5 0V4" stroke="#a6a6a6" stroke-width="1" fill="none"/></svg><svg class="a" style="left:711px;top:380px" width="11" height="17" viewBox="0 0 11 17"><defs><linearGradient id="tg" x1="0" y1="0" x2="1" y2="0"><stop offset="0" stop-color="#f4f4f6"/><stop offset=".5" stop-color="#d8dae2"/><stop offset="1" stop-color="#a9adbd"/></linearGradient></defs><path d="M1.5 .5H9.5Q10.5 .5 10.5 1.5V11L5.5 16.3L.5 11V1.5Q.5 .5 1.5 .5Z" fill="url(#tg)" stroke="#9a9eb0" stroke-width="1"/><path d="M1.3 10.8L5.5 15.4L9.7 10.8" fill="none" stroke="#23a723" stroke-width="1.3"/></svg><div class="a vf" style="left:730px;top:380px">255</div><div class="a btn green" style="left:498px;top:412px;width:70px;height:27px"><div class="bi" style="padding-bottom:2px"><span class="t" style="transform:scaleX(0.87)">BED</span></div></div><div class="a bcb" style="left:580px;top:418px"></div><div class="a trk" style="left:611px;top:418px;width:106px"></div><svg class="a" style="left:611px;top:431px" width="108" height="4" viewBox="0 0 108 4"><path d="M0.5 0V4M4.5 0V4M7.5 0V4M11.5 0V4M14.5 0V4M18.5 0V4M21.5 0V4M25.5 0V4M28.5 0V4M32.5 0V4M35.5 0V4M39.5 0V4M42.5 0V4M46.5 0V4M49.5 0V4M53.5 0V4M57.5 0V4M60.5 0V4M64.5 0V4M67.5 0V4M71.5 0V4M74.5 0V4M78.5 0V4M81.5 0V4M85.5 0V4M88.5 0V4M92.5 0V4M95.5 0V4M99.5 0V4M102.5 0V4M106.5 0V4" stroke="#a6a6a6" stroke-width="1" fill="none"/></svg><svg class="a" style="left:659px;top:414px" width="11" height="17" viewBox="0 0 11 17"><defs><linearGradient id="tg" x1="0" y1="0" x2="1" y2="0"><stop offset="0" stop-color="#f4f4f6"/><stop offset=".5" stop-color="#d8dae2"/><stop offset="1" stop-color="#a9adbd"/></linearGradient></defs><path d="M1.5 .5H9.5Q10.5 .5 10.5 1.5V11L5.5 16.3L.5 11V1.5Q.5 .5 1.5 .5Z" fill="url(#tg)" stroke="#9a9eb0" stroke-width="1"/><path d="M1.3 10.8L5.5 15.4L9.7 10.8" fill="none" stroke="#23a723" stroke-width="1.3"/></svg><div class="a vf" style="left:730px;top:414px">60</div>

<div class="a cb" style="left:776px;top:346px"><svg width="9" height="9" viewBox="0 0 9 9"><path d="M1 4.2L3.4 6.8L8 1.6" stroke="#21a121" stroke-width="1.8" fill="none"/></svg></div>
<div class="a cb" style="left:776px;top:380px"></div>
<div class="a lbl" style="left:779px;top:394px;font-size:10px;line-height:11.4px;width:8px;text-align:center">E<br>d<br>i<br>t</div>

<!-- bottom right buttons -->
<div class="a btn" style="left:492px;top:446px;width:72px;height:28px"><div class="bi" style="display:block"><svg class="a" style="left:25px;top:4px" width="18" height="17" viewBox="0 0 18 17"><defs><linearGradient id="fg" x1="0" y1="0" x2="0" y2="1"><stop offset="0" stop-color="#f1e9cb"/><stop offset="1" stop-color="#d9cda6"/></linearGradient></defs><path d="M1.5 4.2Q1.5 3.5 2.2 3.5H13.3Q14 3.5 14 4.2V14.5H1.5Z" fill="#e9dfbb" stroke="#5b3434" stroke-width=".9"/><rect x="9.2" y="2.6" width="4" height="5.4" fill="#fbf3ee" stroke="#c9a9a0" stroke-width=".5"/><rect x="10.3" y="2.9" width="2.6" height="1.5" fill="#1787e0"/><path d="M3.6 7.5H16.3L14.3 14.6H1.6Z" fill="url(#fg)" stroke="#5b3434" stroke-width=".9" stroke-linejoin="round"/><circle cx="6.2" cy="4.4" r="3.5" fill="#4b8a2a"/><circle cx="6.2" cy="4.4" r="3.5" fill="none" stroke="#3a7420" stroke-width=".5"/><path d="M6.2 2.3V6.5M4.1 4.4H8.3" stroke="#fff" stroke-width="1.3"/></svg></div></div>
<div class="a" style="left:569px;top:447px;width:70px;height:26px;background:#fff"><svg class="a" style="left:11px;top:5px" width="50" height="16" viewBox="0 0 50 16"><g transform="rotate(3 12 8)"><path d="M.8 4.2L7.2 5.2L10 2.6Q11 1.7 12.4 1.7H17.2V13.9H12.6Q11.2 13.9 10.4 12.9L6.8 7.6L1 5.6Z" fill="#828282"/><rect x="17.2" y="3.2" width="6.8" height="10" fill="#929292"/><rect x="19.6" y="5" width="2.2" height="2.2" fill="#b4b4b4"/><rect x="19.6" y="9" width="2.2" height="2.2" fill="#b4b4b4"/><path d="M12.2 4.5V11.4M15.2 4.5V11.4M12.2 8H15.2" stroke="#707070" stroke-width="1" fill="none"/></g><g fill="none" stroke="#a2a2a2" stroke-width="1.6" stroke-linecap="round"><path d="M31.2 4.6Q39 -1.6 46.8 4.6"/><path d="M33.7 7.3Q39 3 44.3 7.3"/><path d="M36.2 9.9Q39 7.7 41.8 9.9"/></g><circle cx="39" cy="12.2" r="1.15" fill="#a2a2a2"/></svg></div>
<div class="a btn foc" style="left:644px;top:446px;width:72px;height:28px"><div class="bi" style="display:block"><svg class="a" style="left:22px;top:3px" width="23.4" height="18.5" viewBox="0 0 24 19"><path d="M11.6 1.2Q13.4 .4 13.6 2Q13.6 3 11.6 4.6L10.6 5.6H20.2Q21.8 5.7 21.8 7.2Q21.8 8.2 21.2 8.5Q23 8.8 23 10.2Q23 11.5 21.6 11.8Q22.4 12.6 22 13.6Q21.6 14.6 20.4 14.6Q20.8 15.8 20 16.6Q19.4 17.2 18.4 17.2H7.4Q4.6 17.2 2.6 15Q1 13 1.2 10.4Q1.5 7.6 4 5.6Q7.6 2.8 11.6 1.2Z" fill="#fff" stroke="#111" stroke-width="1.2" stroke-linejoin="round"/><path d="M13.2 8.6H21.4M13.2 11.6H21.6M13 14.6H20.4" stroke="#444" stroke-width="1.1" fill="none"/></svg></div></div>
<div class="a btn" style="left:720px;top:446px;width:34px;height:28px"><div class="bi" style="display:block"><svg class="a" style="left:7px;top:4px" width="18" height="18" viewBox="0 0 18 18"><rect x="1" y="1" width="16" height="15.6" fill="#fff" fill-opacity=".6"/><path d="M1.5 .5V16.5H17" stroke="#9a9a9a" stroke-width="1" fill="none"/><rect x="1" y="16" width="1.2" height="1.2" fill="#222"/><g stroke="#4a4a70" stroke-width="3" stroke-linecap="round"><path d="M4.2 3.3H15M4.2 8.4H15M4.2 13.5H15"/></g><g stroke="#a4a4ff" stroke-width="1.3" stroke-linecap="round"><path d="M4.4 3.3H14.8M4.4 8.4H14.8M4.4 13.5H14.8"/></g></svg></div></div>
<div class="a btn" style="left:758px;top:446px;width:34px;height:28px"><div class="bi" style="display:block"><svg class="a" style="left:7px;top:4px" width="18" height="18" viewBox="0 0 18 18"><rect x="1" y="1" width="16" height="15.6" fill="#fff" fill-opacity=".6"/><path d="M1.5 .5V16.5H17" stroke="#9a9a9a" stroke-width="1" fill="none"/><rect x="1" y="16" width="1.2" height="1.2" fill="#222"/><g stroke="#4a4a70" stroke-width="3" stroke-linecap="round"><path d="M4.2 3.3H15M4.2 8.4H15M4.2 13.5H15"/></g><g stroke="#a4a4ff" stroke-width="1.3" stroke-linecap="round"><path d="M4.4 3.3H14.8M4.4 8.4H14.8M4.4 13.5H14.8"/></g></svg></div></div>

<!-- title buttons -->
<div class="a tb" style="left:727px"><svg width="19" height="19" viewBox="0 0 19 19"><rect x="4" y="12" width="7" height="3" fill="#fff"/></svg></div>
<div class="a tb" style="left:750px"><svg width="19" height="19" viewBox="0 0 19 19"><rect x="4.5" y="5.5" width="10" height="9" fill="none" stroke="#fff"/><rect x="4" y="4" width="11" height="3" fill="#fff"/></svg></div>
<div class="a tb" style="left:773px"><svg width="19" height="19" viewBox="0 0 19 19"><path d="M4.5 4.5L14.5 14.5M14.5 4.5L4.5 14.5" stroke="#fff" stroke-width="2"/></svg></div>
<svg class="a" style="left:6px;top:8px" width="16" height="17" viewBox="0 0 16 17"><defs><linearGradient id="jg" x1="0" y1="0" x2="0" y2="1"><stop offset="0" stop-color="#fdfdfd"/><stop offset="1" stop-color="#e6e8ec"/></linearGradient></defs><rect x=".5" y=".5" width="15" height="15.5" rx="2" fill="url(#jg)" stroke="#8fa6c4" stroke-opacity=".7"/><path d="M1 15.2Q1 16.4 2.5 16.4H13.5Q15 16.4 15 15.2" fill="none" stroke="#33557f" stroke-width="1.1"/><path d="M8.8 2.2Q5.6 4.6 6.6 6.2Q7.2 7.2 6.8 8.2" fill="none" stroke="#e8731c" stroke-width="1.3"/><path d="M10.3 4.3Q7.6 6 8.4 7.6" fill="none" stroke="#e8731c" stroke-width="1.1"/><path d="M3.8 9.2H10.8M11 9Q13.6 8.6 12.6 10.4Q12 11.4 10.6 11.4M4.6 11H10M3 13H10.5" fill="none" stroke="#3d6a96" stroke-width="1.1"/></svg>
</body></html>
